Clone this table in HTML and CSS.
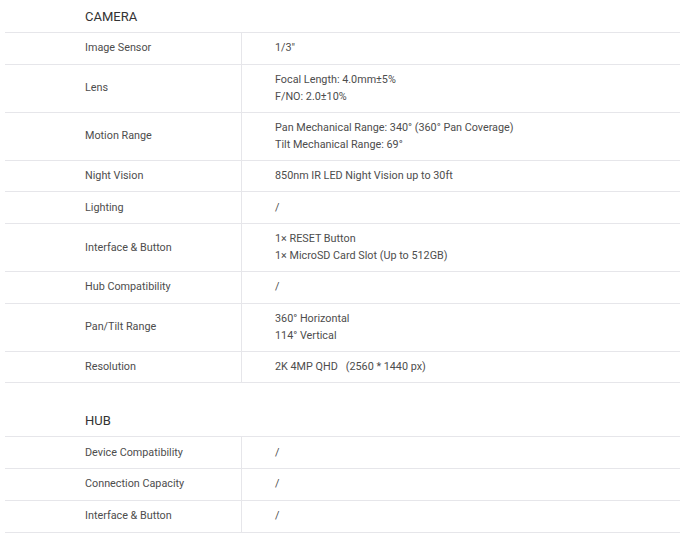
FILE: index.html
```html
<!DOCTYPE html>
<html>
<head>
<meta charset="utf-8">
<link rel="stylesheet" href="styles.css">
</head>
<body>
<div class="specs">
  <section class="group">
    <div class="group-title">CAMERA</div>
    <div class="row"><div class="label">Image Sensor</div><div class="value">1/3"</div></div>
    <div class="row"><div class="label">Lens</div><div class="value"><div>Focal Length: 4.0mm±5%</div><div>F/NO: 2.0±10%</div></div></div>
    <div class="row"><div class="label">Motion Range</div><div class="value"><div>Pan Mechanical Range: 340° (360° Pan Coverage)</div><div>Tilt Mechanical Range: 69°</div></div></div>
    <div class="row"><div class="label">Night Vision</div><div class="value">850nm IR LED Night Vision up to 30ft</div></div>
    <div class="row"><div class="label">Lighting</div><div class="value">/</div></div>
    <div class="row"><div class="label">Interface &amp; Button</div><div class="value"><div>1× RESET Button</div><div>1× MicroSD Card Slot (Up to 512GB)</div></div></div>
    <div class="row"><div class="label">Hub Compatibility</div><div class="value">/</div></div>
    <div class="row"><div class="label">Pan/Tilt Range</div><div class="value"><div>360° Horizontal</div><div>114° Vertical</div></div></div>
    <div class="row"><div class="label">Resolution</div><div class="value">2K 4MP QHD&nbsp;&nbsp;&nbsp;(2560 * 1440 px)</div></div>
  </section>
  <section class="group">
    <div class="group-title">HUB</div>
    <div class="row"><div class="label">Device Compatibility</div><div class="value">/</div></div>
    <div class="row"><div class="label">Connection Capacity</div><div class="value">/</div></div>
    <div class="row"><div class="label">Interface &amp; Button</div><div class="value">/</div></div>
  </section>
</div>
</body>
</html>
```

FILE: styles.css
```css
html, body {
  margin: 0;
  padding: 0;
  background: #ffffff;
}
body {
  font-family: Roboto, "Noto Sans", sans-serif;
  color: #4a4a4a;
}
.specs {
  margin-left: 5px;
  display: flex;
  flex-direction: column;
  gap: 21px;
}
.group {
  display: flex;
  flex-direction: column;
}
.group-title {
  height: 32px;
  display: flex;
  align-items: center;
  padding-left: 80px;
  font-size: 13px;
  color: #333333;
  border-bottom: 1px solid #e6e6ea;
}
.row {
  display: grid;
  grid-template-columns: 237px 1fr;
  min-height: 30.7px;
  border-bottom: 1px solid #e6e6ea;
  font-size: 10.8px;
  line-height: 17px;
}
.label {
  padding: 6px 0 7px 80px;
  display: flex;
  align-items: center;
  border-right: 1px solid #e6e6ea;
  color: #4d4d4d;
}
.value {
  padding: 6px 0 7px 33px;
  display: flex;
  flex-direction: column;
  justify-content: center;
  color: #4d4d4d;
}
```
